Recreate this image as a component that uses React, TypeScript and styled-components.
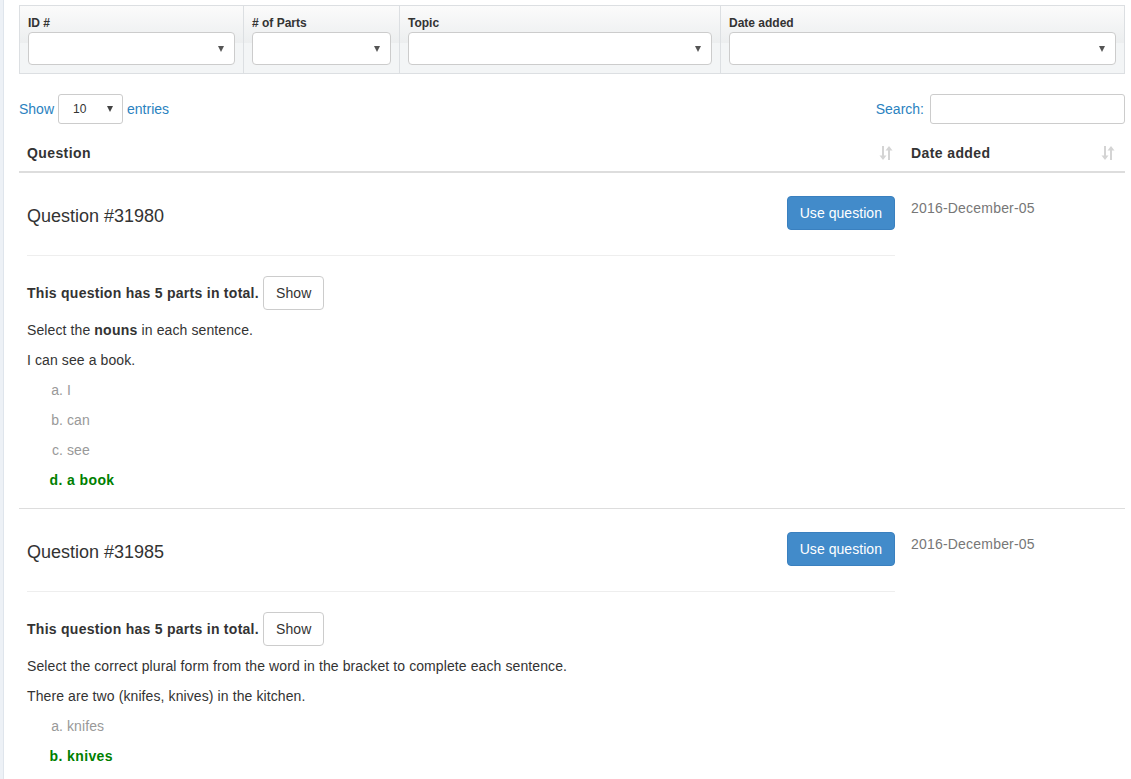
import React from "react";
import styled, { createGlobalStyle } from "styled-components";

type Option = { text: string; correct?: boolean };
type Question = {
  id: number;
  date: string;
  parts: number;
  instruction: React.ReactNode;
  sentence: string;
  options: Option[];
};

const questions: Question[] = [
  {
    id: 31980,
    date: "2016-December-05",
    parts: 5,
    instruction: (
      <>
        Select the <b>nouns</b> in each sentence.
      </>
    ),
    sentence: "I can see a book.",
    options: [{ text: "I" }, { text: "can" }, { text: "see" }, { text: "a book", correct: true }],
  },
  {
    id: 31985,
    date: "2016-December-05",
    parts: 5,
    instruction: "Select the correct plural form from the word in the bracket to complete each sentence.",
    sentence: "There are two (knifes, knives) in the kitchen.",
    options: [{ text: "knifes" }, { text: "knives", correct: true }],
  },
];

const filters = [
  { label: "ID #", width: 224 },
  { label: "# of Parts", width: 156 },
  { label: "Topic", width: 321 },
  { label: "Date added", width: 404 },
];

const SortIcon = () => (
  <svg width="14" height="16" viewBox="0 0 14 16">
    <g fill="none" stroke="#d4d4d4" strokeWidth="2">
      <line x1="4" y1="1" x2="4" y2="13" />
      <line x1="10" y1="3" x2="10" y2="15" />
    </g>
    <path d="M0.5 10.5 L4 15 L7.5 10.5 Z" fill="#d4d4d4" />
    <path d="M6.5 5.5 L10 1 L13.5 5.5 Z" fill="#d4d4d4" />
  </svg>
);

export default function App() {
  return (
    <>
      <GlobalStyle />
      <Page>
        <SideStrip />
        <Main>
          <FilterTable>
            {filters.map((f) => (
              <FilterCell key={f.label} $width={f.width}>
                <FilterLabel>{f.label}</FilterLabel>
                <FakeSelect />
              </FilterCell>
            ))}
          </FilterTable>

          <Toolbar>
            <LengthControl>
              Show
              <SmallSelect>10</SmallSelect>
              entries
            </LengthControl>
            <SearchControl>
              Search:
              <SearchInput />
            </SearchControl>
          </Toolbar>

          <Table>
            <HeadRow>
              <HeadCell $main>
                Question
                <SortIcon />
              </HeadCell>
              <HeadCell>
                Date added
                <SortIcon />
              </HeadCell>
            </HeadRow>

            {questions.map((q) => (
              <BodyRow key={q.id}>
                <QuestionCell>
                  <QuestionHeader>
                    <QuestionTitle>Question #{q.id}</QuestionTitle>
                    <PrimaryButton>Use question</PrimaryButton>
                  </QuestionHeader>
                  <Divider />
                  <QuestionBody>
                    <PartsLine>
                      <b>This question has {q.parts} parts in total.</b>
                      <DefaultButton>Show</DefaultButton>
                    </PartsLine>
                    <Para>{q.instruction}</Para>
                    <Para>{q.sentence}</Para>
                    <Options>
                      {q.options.map((o) => (
                        <OptionItem key={o.text} $correct={o.correct}>
                          {o.text}
                        </OptionItem>
                      ))}
                    </Options>
                  </QuestionBody>
                </QuestionCell>
                <DateCell>{q.date}</DateCell>
              </BodyRow>
            ))}
          </Table>
        </Main>
      </Page>
    </>
  );
}

// --- Styles ---

const GlobalStyle = createGlobalStyle`
  html, body {
    margin: 0;
    padding: 0;
    overflow: hidden;
    background: #fff;
  }
  body {
    font-family: "Liberation Sans", Arial, Helvetica, sans-serif;
    font-size: 14px;
    line-height: 20px;
    letter-spacing: 0.1px;
    color: #333;
  }
  b {
    letter-spacing: 0.27px;
  }
  * { box-sizing: border-box; }
`;

const Page = styled.div`
  display: flex;
  min-height: 779px;
`;

const SideStrip = styled.div`
  width: 4px;
  flex: none;
  background: #edf1f6;
  border-right: 1px solid #dfe5ec;
`;

const Main = styled.div`
  width: 1106px;
  margin: 5px 0 0 15px;
`;

const FilterTable = styled.div`
  display: flex;
  border: 1px solid #dcdfe2;
  background: linear-gradient(
    to bottom,
    #fbfbfb 0,
    #eceeef 37px,
    #f3f5f6 37px,
    #f3f5f6 100%
  );
`;

const FilterCell = styled.div<{ $width: number }>`
  width: ${(p) => p.$width}px;
  padding: 9px 8px 8px 8px;
  border-right: 1px solid #dcdfe2;

  &:last-child {
    border-right: none;
    flex: 1;
  }
`;

const FilterLabel = styled.div`
  font-size: 12px;
  font-weight: bold;
  line-height: 16px;
  letter-spacing: 0;
  color: #333;
  margin-bottom: 1px;
`;

const FakeSelect = styled.div`
  position: relative;
  height: 33px;
  background: #fff;
  border: 1px solid #ccc;
  border-radius: 4px;

  &::after {
    content: "";
    position: absolute;
    right: 10px;
    top: 13px;
    border-left: 3.5px solid transparent;
    border-right: 3.5px solid transparent;
    border-top: 6px solid #555;
  }
`;

const Toolbar = styled.div`
  display: flex;
  justify-content: space-between;
  align-items: center;
  margin-top: 20px;
  height: 30px;
  color: #2a82c0;
  font-size: 14px;
  letter-spacing: 0;
`;

const LengthControl = styled.div`
  display: flex;
  align-items: center;
  gap: 4px;
`;

const SmallSelect = styled.div`
  position: relative;
  width: 65px;
  height: 30px;
  border: 1px solid #ccc;
  border-radius: 3px;
  background: #fff;
  color: #333;
  font-size: 12px;
  line-height: 28px;
  padding-left: 14px;

  &::after {
    content: "";
    position: absolute;
    right: 9px;
    top: 11px;
    border-left: 3.5px solid transparent;
    border-right: 3.5px solid transparent;
    border-top: 6px solid #444;
  }
`;

const SearchControl = styled.div`
  display: flex;
  align-items: center;
  gap: 6px;
`;

const SearchInput = styled.div`
  width: 195px;
  height: 30px;
  border: 1px solid #ccc;
  border-radius: 3px;
  background: #fff;
`;

const Table = styled.div`
  margin-top: 13px;
`;

const HeadRow = styled.div`
  display: flex;
  border-bottom: 2px solid #ddd;
`;

const HeadCell = styled.div<{ $main?: boolean }>`
  display: flex;
  align-items: center;
  justify-content: space-between;
  width: ${(p) => (p.$main ? "884px" : "222px")};
  padding: 6px 10px 8px 8px;
  font-weight: bold;
  letter-spacing: 0.4px;
  line-height: 20px;
`;

const BodyRow = styled.div`
  display: flex;
  border-bottom: 1px solid #ddd;
`;

const QuestionCell = styled.div`
  width: 884px;
  padding: 8px;
`;

const QuestionHeader = styled.div`
  display: flex;
  align-items: center;
  justify-content: space-between;
  padding-top: 15px;
`;

const QuestionTitle = styled.h4`
  margin: 0;
  font-size: 18px;
  font-weight: normal;
  line-height: 20px;
  letter-spacing: 0;
  padding-top: 6px;
  color: #333;
`;

const PrimaryButton = styled.button`
  font-family: inherit;
  font-size: 14px;
  line-height: 20px;
  letter-spacing: 0.05px;
  padding: 6px 12px;
  color: #fff;
  background: #428bca;
  border: 1px solid #3a80bf;
  border-radius: 4px;
  height: 34px;
`;

const DefaultButton = styled.button`
  font-family: inherit;
  font-size: 14px;
  line-height: 20px;
  letter-spacing: 0.1px;
  padding: 6px 12px;
  color: #333;
  background: #fff;
  border: 1px solid #ccc;
  border-radius: 4px;
  height: 34px;
`;

const Divider = styled.div`
  margin-top: 25px;
  border-top: 1px solid #eee;
`;

const QuestionBody = styled.div`
  padding-top: 20px;
`;

const PartsLine = styled.div`
  display: flex;
  align-items: center;
  gap: 4px;
  margin-bottom: 10px;
`;

const Para = styled.p`
  margin: 0 0 10px;
`;

const Options = styled.ol`
  list-style-type: lower-alpha;
  margin: 0 0 10px;
  padding-left: 40px;
`;

const OptionItem = styled.li<{ $correct?: boolean }>`
  line-height: 20px;
  margin-bottom: 10px;
  color: ${(p) => (p.$correct ? "#008000" : "#999")};
  font-weight: ${(p) => (p.$correct ? "bold" : "normal")};
  letter-spacing: ${(p) => (p.$correct ? "0.4px" : "0.1px")};

  &:last-child {
    margin-bottom: 0;
  }
`;

const DateCell = styled.div`
  width: 222px;
  padding: 25px 8px 8px;
  letter-spacing: 0.2px;
  color: #777;
`;
